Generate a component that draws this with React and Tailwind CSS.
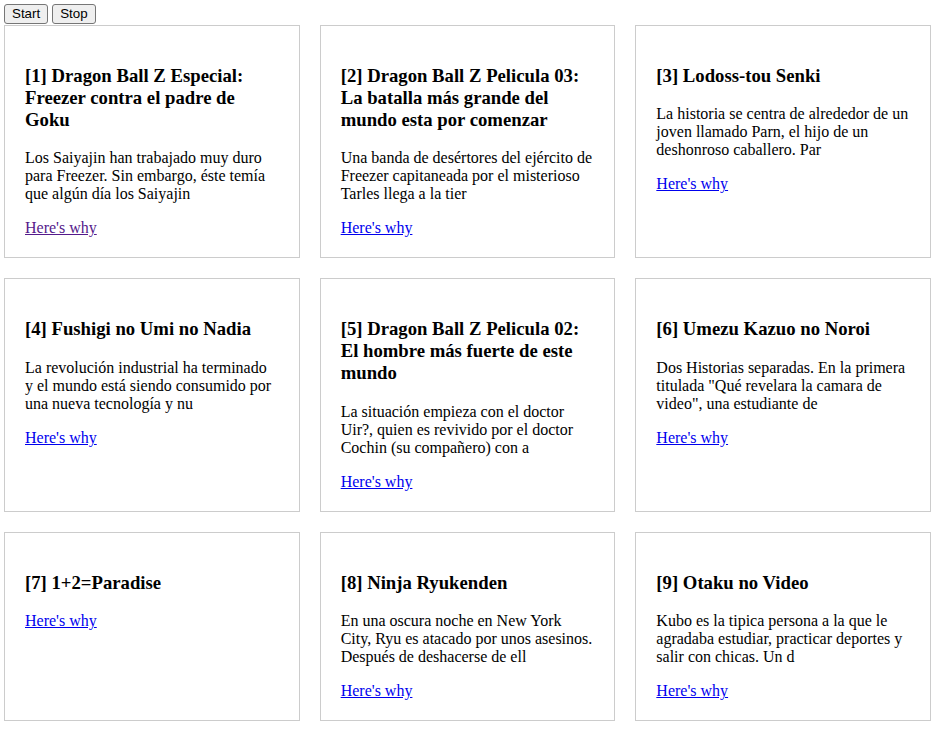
import React from 'react';

const animes = [
  {
    id: 1,
    title: 'Dragon Ball Z Especial: Freezer contra el padre de Goku',
    sinopsis: 'Los Saiyajin han trabajado muy duro para Freezer. Sin embargo, éste temía que algún día los Saiyajin',
    visited: true,
  },
  {
    id: 2,
    title: 'Dragon Ball Z Pelicula 03: La batalla más grande del mundo esta por comenzar',
    sinopsis: 'Una banda de desértores del ejército de Freezer capitaneada por el misterioso Tarles llega a la tier',
  },
  {
    id: 3,
    title: 'Lodoss-tou Senki',
    sinopsis: 'La historia se centra de alrededor de un joven llamado Parn, el hijo de un deshonroso caballero. Par',
  },
  {
    id: 4,
    title: 'Fushigi no Umi no Nadia',
    sinopsis: 'La revolución industrial ha terminado y el mundo está siendo consumido por una nueva tecnología y nu',
  },
  {
    id: 5,
    title: 'Dragon Ball Z Pelicula 02: El hombre más fuerte de este mundo',
    sinopsis: 'La situación empieza con el doctor Uir?, quien es revivido por el doctor Cochin (su compañero) con a',
  },
  {
    id: 6,
    title: 'Umezu Kazuo no Noroi',
    sinopsis: 'Dos Historias separadas. En la primera titulada "Qué revelara la camara de video", una estudiante de',
  },
  { id: 7, title: '1+2=Paradise', sinopsis: '' },
  {
    id: 8,
    title: 'Ninja Ryukenden',
    sinopsis: 'En una oscura noche en New York City, Ryu es atacado por unos asesinos. Después de deshacerse de ell',
  },
  {
    id: 9,
    title: 'Otaku no Video',
    sinopsis: 'Kubo es la tipica persona a la que le agradaba estudiar, practicar deportes y salir con chicas. Un d',
  },
];

const Card = ({ anime }) => (
  <div className="border border-[#cccccc] px-5 pt-5 pb-5">
    <h3 className="mt-[18.72px] mb-[18.72px] text-[18.72px] font-bold leading-[normal]">
      [{anime.id}] {anime.title}
    </h3>
    {anime.sinopsis && <p className="mb-4 text-base leading-[normal]">{anime.sinopsis}</p>}
    <a
      href="#"
      className={
        'block text-base leading-[normal] underline ' +
        (anime.visited ? 'text-[#551a8b]' : 'text-[#0000ee]')
      }
    >
      Here's why
    </a>
  </div>
);

export default function App() {
  return (
    <div className="bg-white text-black font-['Liberation_Serif','Times_New_Roman',serif] pl-1 pt-1 pb-2 w-[941px]">
      <div className="flex gap-1 font-['Liberation_Sans',Arial,sans-serif] text-[13.33px]">
        <button className="h-5 px-[7px] bg-[#efefef] border border-[#767676] rounded-[3px] leading-none">Start</button>
        <button className="h-5 px-[7px] bg-[#efefef] border border-[#767676] rounded-[3px] leading-none">Stop</button>
      </div>
      <div className="grid grid-cols-3 gap-5 w-[927px] mt-[1px]">
        {animes.map((a) => (
          <Card key={a.id} anime={a} />
        ))}
      </div>
    </div>
  );
}
